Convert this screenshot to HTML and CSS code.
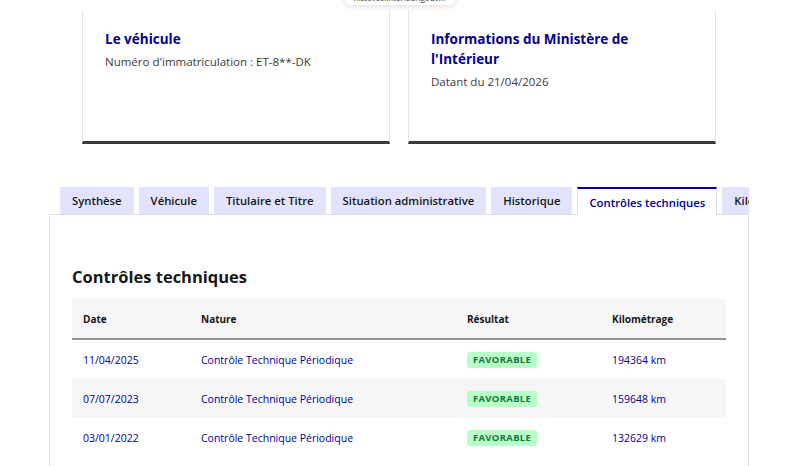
FILE: index.html
```html
<!DOCTYPE html>
<html lang="fr">
<head>
  <meta charset="UTF-8">
  <meta name="viewport" content="width=device-width, initial-scale=1.0">
  <title>HistoVec - Contrôles techniques</title>
  <link rel="stylesheet" href="styles.css">
</head>
<body>
  <div class="url-pill">histovec.interieur.gouv.fr</div>

  <div class="cards">
    <div class="card">
      <h3 class="card-title">Le véhicule</h3>
      <p class="card-desc">Numéro d'immatriculation : ET-8**-DK</p>
    </div>
    <div class="card">
      <h3 class="card-title">Informations du Ministère de l'Intérieur</h3>
      <p class="card-desc">Datant du 21/04/2026</p>
    </div>
  </div>

  <div class="tabs">
    <ul class="tab-list">
      <li><button class="tab">Synthèse</button></li>
      <li><button class="tab">Véhicule</button></li>
      <li><button class="tab">Titulaire et Titre</button></li>
      <li><button class="tab">Situation administrative</button></li>
      <li><button class="tab">Historique</button></li>
      <li><button class="tab active">Contrôles techniques</button></li>
      <li><button class="tab">Kilométrage</button></li>
    </ul>
    <div class="tab-panel">
      <h2>Contrôles techniques</h2>
      <table class="table">
        <thead>
          <tr>
            <th class="col-date">Date</th>
            <th class="col-nature">Nature</th>
            <th class="col-result">Résultat</th>
            <th>Kilométrage</th>
          </tr>
        </thead>
        <tbody>
          <tr>
            <td>11/04/2025</td>
            <td>Contrôle Technique Périodique</td>
            <td><span class="badge">Favorable</span></td>
            <td>194364 km</td>
          </tr>
          <tr>
            <td>07/07/2023</td>
            <td>Contrôle Technique Périodique</td>
            <td><span class="badge">Favorable</span></td>
            <td>159648 km</td>
          </tr>
          <tr>
            <td>03/01/2022</td>
            <td>Contrôle Technique Périodique</td>
            <td><span class="badge">Favorable</span></td>
            <td>132629 km</td>
          </tr>
        </tbody>
      </table>
    </div>
  </div>
</body>
</html>
```

FILE: styles.css
```css
body {
  font-family: 'Open Sans', sans-serif;
  background: white;
  color: #161616;
  margin: 0;
  padding: 0;
  height: 466px;
  overflow: hidden;
}
.url-pill {
  position: absolute;
  top: -9px;
  left: 345px;
  width: 110px;
  height: 14px;
  background: white;
  border-radius: 6px;
  box-shadow: 0 1px 6px rgba(0, 0, 0, 0.15);
  font-size: 8px;
  line-height: 14px;
  color: #333;
  text-align: center;
  overflow: hidden;
}
.cards {
  display: flex;
  gap: 18px;
  padding: 10px 0 0 82px;
}
.card {
  width: 262px;
  height: 112px;
  padding: 19px 22px 0 22px;
  border-left: 1px solid #e5e5e5;
  border-right: 1px solid #e5e5e5;
  border-bottom: 3px solid #3a3a3a;
}
.card-title {
  margin: 0;
  font-size: 13.5px;
  line-height: 20px;
  font-weight: 700;
  color: #000091;
}
.card-desc {
  margin: 5px 0 0;
  font-size: 11.5px;
  line-height: 16px;
  color: #3a3a3a;
}
.tabs {
  margin: 43px 0 0 49px;
  width: 700px;
}
.tab-list {
  display: flex;
  gap: 5px;
  list-style: none;
  margin: 0;
  padding: 0 0 0 11px;
  height: 28px;
  overflow: hidden;
  position: relative;
  z-index: 1;
}
.tab {
  height: 27px;
  padding: 0 12px;
  border: none;
  background: #e3e3fd;
  font-family: 'Open Sans', sans-serif;
  font-size: 11.3px;
  font-weight: 600;
  color: #161616;
  white-space: nowrap;
  cursor: pointer;
}
.tab.active {
  height: 28px;
  background: white;
  color: #000091;
  border-top: 2px solid #000091;
  border-left: 1px solid #ddd;
  border-right: 1px solid #ddd;
  padding: 0 11px;
}
.tab-panel {
  margin-top: -1px;
  border: 1px solid #ddd;
  border-bottom: none;
  padding: 42px 22px 0 22px;
  height: 300px;
}
.tab-panel h2 {
  margin: 5px 0 7px;
  font-size: 16.5px;
  line-height: 30px;
  font-weight: 700;
  color: #161616;
}
.table {
  width: 100%;
  border-collapse: collapse;
  font-size: 10.5px;
}
.table th {
  background: #f6f6f6;
  height: 39px;
  padding: 0 11px;
  text-align: left;
  font-size: 10px;
  font-weight: 700;
  border-bottom: 2px solid #929292;
}
.table td {
  height: 39px;
  padding: 0 11px;
  color: #000091;
}
.table tbody tr:nth-child(even) td {
  background: #f6f6f6;
}
.col-date { width: 96px; }
.col-nature { width: 244px; }
.col-result { width: 123px; }
.badge {
  display: inline-block;
  background: #b8fec9;
  color: #18753c;
  font-size: 9.5px;
  font-weight: 700;
  text-transform: uppercase;
  line-height: 16px;
  padding: 0 6px;
  border-radius: 3px;
  letter-spacing: 0.3px;
}
```
